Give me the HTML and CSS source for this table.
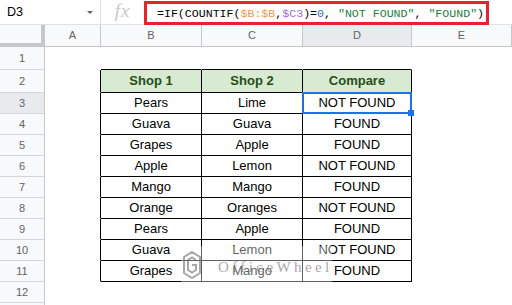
FILE: index.html
```html
<!DOCTYPE html>
<html>
<head>
<meta charset="utf-8">
<link rel="stylesheet" href="styles.css">
</head>
<body>
<div class="app">
  <div class="topbar">
    <div class="namebox"><span class="ref">D3</span><span class="caret"></span></div>
    <div class="fx">fx</div>
    <div class="formula"><span class="k">=IF(COUNTIF(</span><span class="r1">$B:$B</span><span class="k">,</span><span class="r2">$C3</span><span class="k">)=</span><span class="n">0</span><span class="k">, </span><span class="s">"NOT FOUND"</span><span class="k">, </span><span class="s">"FOUND"</span><span class="k">)</span></div>
  </div>
  <div class="sheet">
    <div class="row colhdr">
      <div class="corner"></div>
      <div class="ch">A</div><div class="ch">B</div><div class="ch">C</div><div class="ch sel">D</div><div class="ch">E</div>
    </div>
    <div class="row r23">
      <div class="rh">1</div><div class="c"></div><div class="c tt"></div><div class="c tt"></div><div class="c tt"></div><div class="c"></div>
    </div>
    <div class="row r23">
      <div class="rh">2</div><div class="c tl"></div><div class="c tb th">Shop 1</div><div class="c tb th">Shop 2</div><div class="c tb th">Compare</div><div class="c"></div>
    </div>
    <div class="row">
      <div class="rh sel">3</div><div class="c tl"></div><div class="c tb">Pears</div><div class="c tb">Lime</div><div class="c tb active">NOT FOUND<span class="selbox"><span class="handle"></span></span></div><div class="c"></div>
    </div>
    <div class="row">
      <div class="rh">4</div><div class="c tl"></div><div class="c tb">Guava</div><div class="c tb">Guava</div><div class="c tb">FOUND</div><div class="c"></div>
    </div>
    <div class="row">
      <div class="rh">5</div><div class="c tl"></div><div class="c tb">Grapes</div><div class="c tb">Apple</div><div class="c tb">FOUND</div><div class="c"></div>
    </div>
    <div class="row">
      <div class="rh">6</div><div class="c tl"></div><div class="c tb">Apple</div><div class="c tb">Lemon</div><div class="c tb">NOT FOUND</div><div class="c"></div>
    </div>
    <div class="row">
      <div class="rh">7</div><div class="c tl"></div><div class="c tb">Mango</div><div class="c tb">Mango</div><div class="c tb">FOUND</div><div class="c"></div>
    </div>
    <div class="row">
      <div class="rh">8</div><div class="c tl"></div><div class="c tb">Orange</div><div class="c tb">Oranges</div><div class="c tb">NOT FOUND</div><div class="c"></div>
    </div>
    <div class="row">
      <div class="rh">9</div><div class="c tl"></div><div class="c tb">Pears</div><div class="c tb">Apple</div><div class="c tb">FOUND</div><div class="c"></div>
    </div>
    <div class="row">
      <div class="rh">10</div><div class="c tl"></div><div class="c tb">Guava</div><div class="c tb">Lemon</div><div class="c tb">NOT FOUND</div><div class="c"></div>
    </div>
    <div class="row">
      <div class="rh">11</div><div class="c tl"></div><div class="c tb">Grapes</div><div class="c tb">Mango</div><div class="c tb">FOUND</div><div class="c"></div>
    </div>
    <div class="row">
      <div class="rh">12</div><div class="c"></div><div class="c"></div><div class="c"></div><div class="c"></div><div class="c"></div>
    </div>
    <div class="row">
      <div class="rh"></div><div class="c"></div><div class="c"></div><div class="c"></div><div class="c"></div><div class="c"></div>
    </div>
    <div class="watermark">
      <svg class="logo" width="20" height="30" viewBox="0 0 20 30">
        <path d="M10 2 L18 7 L18 23 L10 28 L2 23 L2 7 Z" fill="none" stroke="#8a8a8a" stroke-width="2"/>
        <path d="M14 10 L10 7.5 L6 10 L6 20 L10 22.5 L14 20 L14 15 L10 15" fill="none" stroke="#8a8a8a" stroke-width="2"/>
      </svg>
      <span class="wm-text">OfficeWheel</span>
    </div>
  </div>
</div>
</body>
</html>
```

FILE: styles.css
```css
* { box-sizing: border-box; }
html, body { margin: 0; padding: 0; background: #fff; }
body { width: 512px; height: 305px; overflow: hidden; font-family: "Liberation Sans", Arial, sans-serif; }
.app { width: 512px; height: 305px; overflow: hidden; }

.topbar { display: flex; height: 25px; border-bottom: 1px solid #e1e1e1; }
.namebox { width: 101px; border-right: 1px solid #e1e1e1; display: flex; align-items: center; justify-content: space-between; padding: 0 7px 0 7px; }
.ref { font-size: 12.5px; color: #000; }
.caret { width: 0; height: 0; border-left: 3px solid transparent; border-right: 3px solid transparent; border-top: 3px solid #5f6368; margin-top: 1px; }
.fx { width: 43px; display: flex; align-items: center; justify-content: center; font-family: "Liberation Serif", serif; font-style: italic; font-size: 19px; color: #c8c8c8; letter-spacing: 1px; padding-bottom: 2px; }
.formula { position: relative; z-index: 1; align-self: flex-start; margin-top: 1px; width: 345px; height: 24px; border: 3px solid #e8212b; display: flex; align-items: center; padding-left: 10px; font-family: "Liberation Mono", monospace; font-size: 11.6px; white-space: pre; color: #000; }
.formula .r1 { color: #ee9a4d; }
.formula .r2 { color: #a26bd0; }
.formula .n { color: #1f6fd8; }
.formula .s { color: #1a8040; }

.sheet { position: relative; }
.row { display: grid; grid-template-columns: 45px 56px 101px 101px 109px 1fr; height: 21px; }
.row.colhdr { height: 22px; }
.row.r23 { height: 23px; }

.corner { background: #f8f9fa; border-right: 4px solid #c4c7c5; border-bottom: 4px solid #c4c7c5; }
.ch { background: #f8f9fa; border-right: 1px solid #c7c7c7; border-bottom: 1px solid #c7c7c7; text-align: center; font-size: 11px; color: #5f6368; line-height: 21px; }
.ch.sel, .rh.sel { background: #e8eaed; }
.rh { background: #f8f9fa; border-right: 1px solid #c7c7c7; border-bottom: 1px solid #d6d6d6; text-align: center; font-size: 11px; color: #5f6368; line-height: 20px; }
.r23 .rh { line-height: 22px; }

.c { border-right: 1px solid transparent; border-bottom: 1px solid transparent; text-align: center; font-size: 13px; color: #000; line-height: 20px; white-space: nowrap; }
.r23 .c { line-height: 22px; }
.tt { border-bottom-color: #000; }
.tl { border-right-color: #000; }
.tb { border-right-color: #000; border-bottom-color: #000; }
.th { background: #d9ead3; color: #274e13; font-weight: bold; }

.active { position: relative; }
.selbox { position: absolute; top: -1px; left: -1px; right: -1px; bottom: -1px; border: 2px solid #1a73e8; }
.handle { position: absolute; right: -4px; bottom: -4px; width: 6px; height: 6px; background: #1a73e8; }

.watermark { position: absolute; left: 181px; top: 221px; width: 151px; height: 37px; background: rgba(255,255,255,0.5); display: flex; align-items: center; gap: 16px; padding-left: 1px; opacity: 0.75; }
.logo { flex: none; }
.wm-text { font-family: "Liberation Serif", serif; font-size: 15px; letter-spacing: 3.4px; color: #8c8c8c; margin-top: 6px; }
```
